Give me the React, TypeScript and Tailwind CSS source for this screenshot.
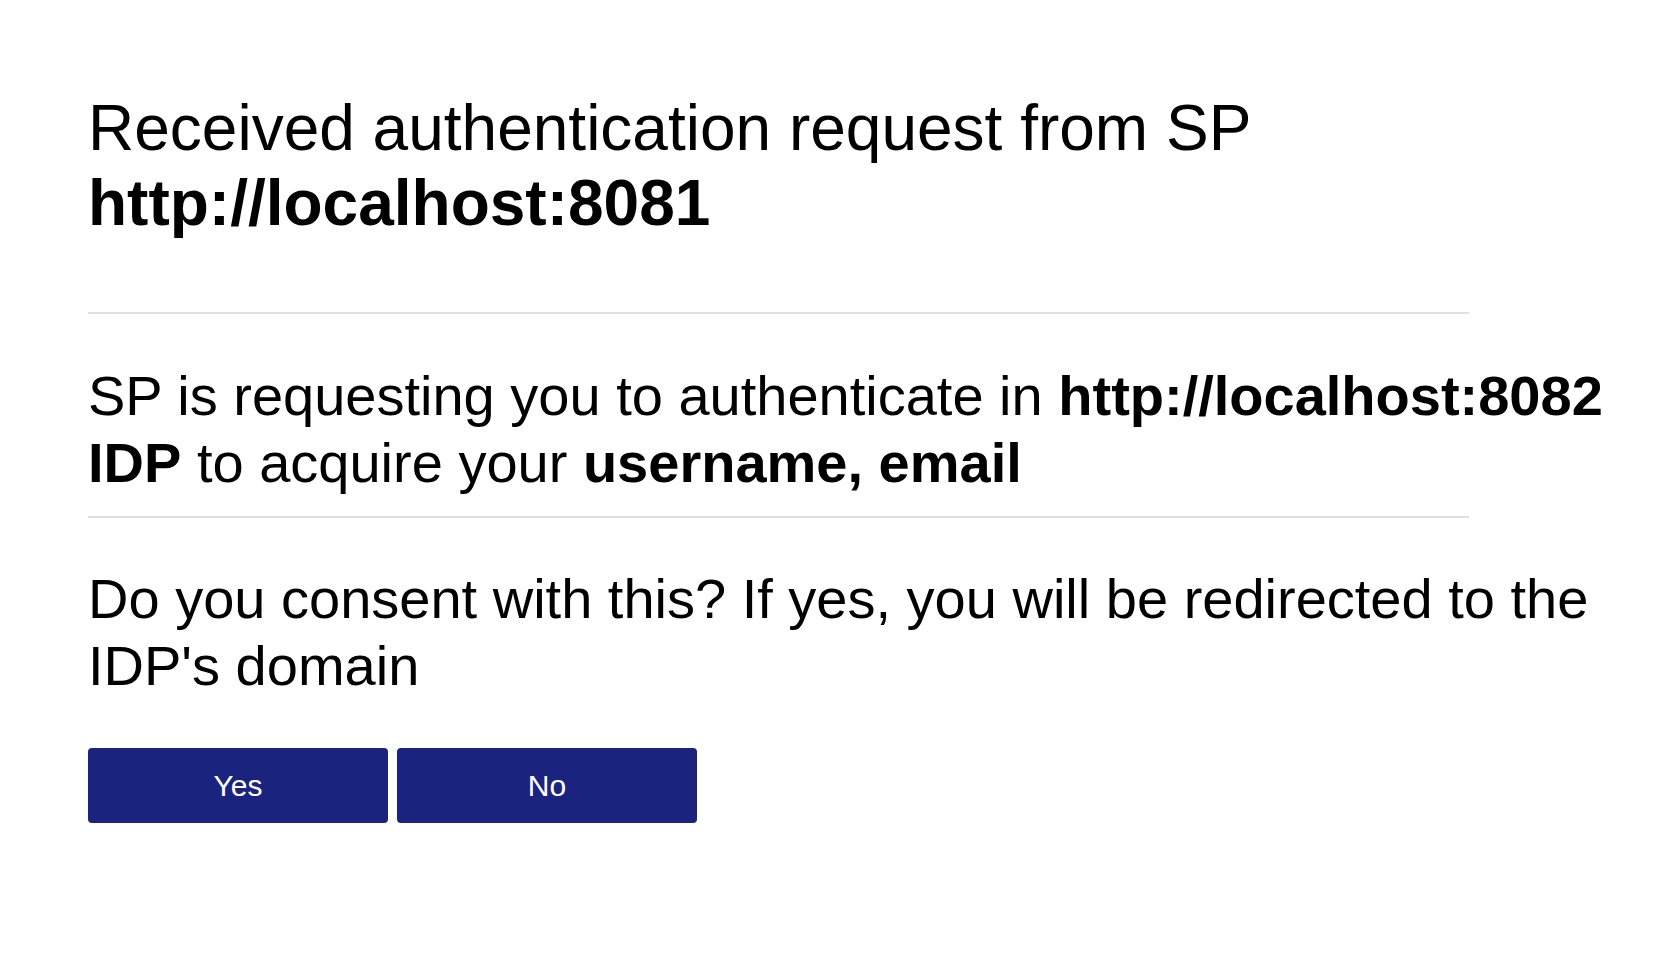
export default function App() {
  return (
    <div className="min-h-screen bg-white pl-[88px] pt-[91px] text-black font-['Liberation_Sans',Arial,sans-serif]">
      <h1 className="text-[64px] leading-[1.17] font-normal">
        Received authentication request from SP{" "}
        <strong className="font-bold">http://localhost:8081</strong>
      </h1>

      <hr className="mt-[71px] w-[1381px] border-0 border-t-2 border-[#e0e0e0]" />

      <p className="mt-[48px] text-[56px] leading-[1.2]">
        SP is requesting you to authenticate in{" "}
        <strong className="font-bold">http://localhost:8082 IDP</strong> to
        acquire your <strong className="font-bold">username, email</strong>
      </p>

      <hr className="mt-[20px] w-[1381px] border-0 border-t-2 border-[#e0e0e0]" />

      <p className="mt-[47px] text-[56px] leading-[1.2]">
        Do you consent with this? If yes, you will be redirected to the IDP's
        domain
      </p>

      <div className="mt-[48px] flex gap-[9px]">
        <button className="w-[300px] h-[75px] rounded-[4px] bg-[#1a237e] text-white text-[30px]">
          Yes
        </button>
        <button className="w-[300px] h-[75px] rounded-[4px] bg-[#1a237e] text-white text-[30px]">
          No
        </button>
      </div>
    </div>
  );
}
